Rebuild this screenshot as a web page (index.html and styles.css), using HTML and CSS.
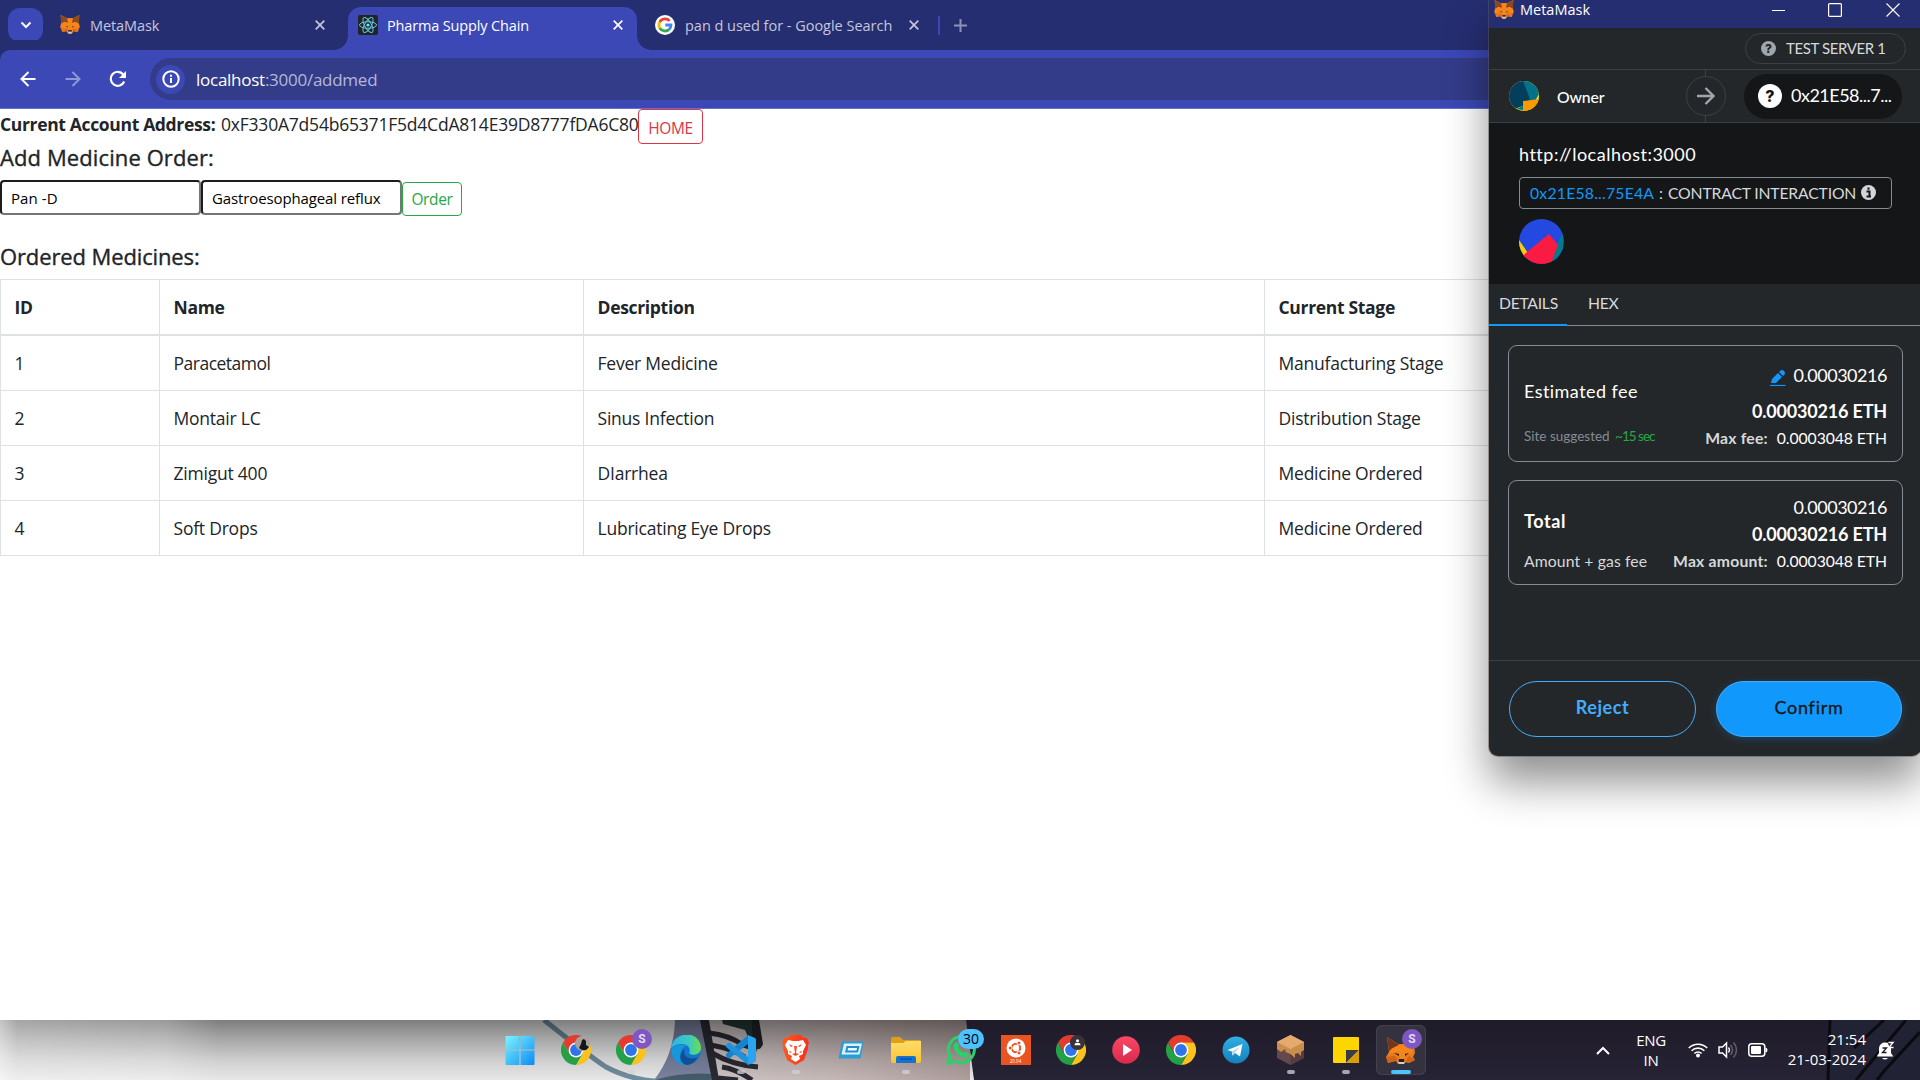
FILE: index.html
```html
<!DOCTYPE html>
<html lang="en">
<head>
<meta charset="utf-8">
<title>Pharma Supply Chain</title>
<link rel="stylesheet" href="styles.css">
</head>
<body>
<svg class="defs" aria-hidden="true">
  <defs>
    <linearGradient id="win" x1="0" y1="0" x2="1" y2="1"><stop offset="0" stop-color="#7df3ff"/><stop offset="1" stop-color="#0a8cf5"/></linearGradient>
    <linearGradient id="edgeTop" x1="0" y1="0" x2="1" y2="0"><stop offset="0" stop-color="#2bb4e8"/><stop offset=".6" stop-color="#3cc9c0"/><stop offset="1" stop-color="#6be04a"/></linearGradient>
    <linearGradient id="folder" x1="0" y1="0" x2="0" y2="1"><stop offset="0" stop-color="#ffdc6b"/><stop offset="1" stop-color="#f9c431"/></linearGradient>
    <linearGradient id="tg" x1="0" y1="0" x2="0" y2="1"><stop offset="0" stop-color="#31aee6"/><stop offset="1" stop-color="#1580bd"/></linearGradient>
    <linearGradient id="brave" x1="0" y1="0" x2="1" y2="0"><stop offset="0" stop-color="#ff5a1c"/><stop offset="1" stop-color="#fb2f1c"/></linearGradient>
    <linearGradient id="play" x1="0" y1="0" x2="0" y2="1"><stop offset="0" stop-color="#fb4766"/><stop offset="1" stop-color="#d92a4c"/></linearGradient>
  </defs>
  <symbol id="fox" viewBox="0 0 32 30" preserveAspectRatio="none">
    <path fill="#e8791f" d="M1 0l10.500 5h9L31 0l-1 12 1.500 6-3 9-7-1.500-3 4h-5l-3-4-7 1.500-3-9L2 12z"/>
    <path fill="#8a4a1e" d="M1 0l10.500 5 1.500 7-6-1-5 3-.5-6zM31 0L20.500 5 19 12l6-1 5 3 .5-6z"/>
    <path fill="#f6851b" d="M11.500 5h9L19 12l2 8-3 4h-4l-3-4 2-8z"/>
    <path fill="#f6851b" d="M2 14l5-3 6 2-2.500 7H.8zM30 14l-5-3-6 2 2.500 7h9.700z"/>
    <path fill="#d96b17" d="M3.500 27l7-5.500 1 4zM28.500 27l-7-5.500-1 4z"/>
    <path fill="#233447" d="M8.500 17l4 1 .7 2zM23.500 17l-4 1-.7 2zM13 24.500l1-1h4l1 1-.3 2h-5.400z"/>
    <path fill="#d5bfb2" d="M11 26l2 .4h6l2-.4-3 3.500h-4z"/>
  </symbol>
  <symbol id="fox-tilt" viewBox="0 0 30 28">
    <path fill="#e8791f" d="M1 1l11 7h10l6 0 1 9-2 4 2 3-6 3-4-1-2 2h-5l-2-3-8 2-2-6 3-5z"/>
    <path fill="#70371c" d="M1 1l12 8-6 3-4 3z"/>
    <path fill="#f6851b" d="M13 9h9l6-1-2 10-6-1-2 6h-4l-2-7-7 1-2 4 2-8z"/>
    <path fill="#cf6516" d="M0 21l9-1 3 4-10 3zM29 24l-6-4-3 5 3 2z"/>
    <path fill="#1b222c" d="M8 17l5 1v2zM23 17l-4 1v2zM13 23h5l.500 3h-6z"/>
    <path fill="#d9cdc6" d="M11 25l2 1h5l2-1-2 3h-5z"/>
  </symbol>
  <symbol id="chrome" viewBox="-15 -15 30 30">
    <path fill="#e33b2e" d="M-13 -7.500A15 15 0 0 1 13 -7.500L0 -7 -6.500 3.500z"/>
    <path fill="#fbc11c" d="M13 -7.500A15 15 0 0 1 0 15L6.500 3.700 0 -7.500z"/>
    <path fill="#24a047" d="M0 15A15 15 0 0 1 -13 -7.500L-6.500 3.750 6.500 3.750z"/>
    <circle r="7.400" fill="#fff"/><circle r="5.900" fill="#2f74ea"/>
  </symbol>
  <symbol id="close" viewBox="0 0 10 10"><path d="M.7.7l8.600 8.600M9.300.7L.7 9.300" stroke="currentColor" stroke-width="1.700" fill="none"/></symbol>
</svg>

<div class="desktop">
<header class="tabstrip">
  <div class="tab-search"><svg width="12" height="8" viewBox="0 0 12 8"><path d="M1.500 1.500L6 6l4.500-4.500" fill="none" stroke="#fff" stroke-width="2"/></svg></div>
  <div class="tab tab-first"><svg class="fav" width="20" height="19"><use href="#fox"/></svg><span class="tab-title t-meta">MetaMask</span><svg class="x" width="10" height="10"><use href="#close"/></svg></div>
  <div class="tab tab-active">
    <svg class="fav" width="20" height="20" viewBox="0 0 20 20"><rect width="20" height="20" rx="2" fill="#222528"/><g fill="none" stroke="#5fc8e0"><ellipse cx="10" cy="10" rx="8.500" ry="3.300"/><ellipse cx="10" cy="10" rx="8.500" ry="3.300" transform="rotate(60 10 10)"/><ellipse cx="10" cy="10" rx="8.500" ry="3.300" transform="rotate(120 10 10)"/></g><circle cx="10" cy="10" r="1.600" fill="#7fe0f5"/></svg>
    <span class="tab-title t-pharma">Pharma Supply Chain</span><svg class="x" width="10" height="10"><use href="#close"/></svg>
  </div>
  <div class="tab tab-last">
    <svg class="fav" width="20" height="20" viewBox="0 0 20 20"><circle cx="10" cy="10" r="10" fill="#fff"/><g fill="none" stroke-width="2.800"><path stroke="#ea4335" d="M14.600 5.900A6.100 6.100 0 0 0 4.700 7.100"/><path stroke="#fbbc05" d="M4.700 7.100a6.100 6.100 0 0 0 0 5.900"/><path stroke="#34a853" d="M4.700 13a6.100 6.100 0 0 0 9.400 1.400"/><path stroke="#4285f4" d="M14.100 14.400A6 6 0 0 0 16 10h-5.700"/></g></svg>
    <span class="tab-title t-google">pan d used for - Google Search</span><svg class="x" width="10" height="10"><use href="#close"/></svg>
  </div>
  <div class="tab-sep"></div>
  <svg class="new-tab" width="13" height="13" viewBox="0 0 13 13"><path d="M6.500 0v13M0 6.500h13" stroke="#8d92b7" stroke-width="2"/></svg>
</header>

<nav class="toolbar">
  <svg class="nav-back" width="16" height="16" viewBox="0 0 16 16"><path d="M15.500 8H2M8.500 1L1.500 8l7 7" fill="none" stroke="#fff" stroke-width="2"/></svg>
  <svg class="nav-fwd" width="16" height="16" viewBox="0 0 16 16"><path d="M.5 8H14M7.500 1l7 7-7 7" fill="none" stroke="#9098d4" stroke-width="2"/></svg>
  <svg class="nav-reload" width="18" height="18" viewBox="0 0 18 18"><path d="M15.200 11.500A7 7 0 1 1 14.300 4.500L16 6.500" fill="none" stroke="#fff" stroke-width="2.200"/><path d="M17 1v7h-7z" fill="#fff"/></svg>
  <div class="omnibox">
    <div class="site-info"><svg width="18" height="18" viewBox="0 0 18 18"><circle cx="9" cy="9" r="7.700" fill="none" stroke="#fff" stroke-width="2"/><path d="M9 8v5M9 4.700v2" stroke="#fff" stroke-width="2"/></svg></div>
    <span class="url"><b>localhost</b>:3000/addmed</span>
  </div>
</nav>

<main class="page">
  <div class="account-row"><strong>Current Account Address:</strong><span class="address">0xF330A7d54b65371F5d4CdA814E39D8777fDA6C80</span><button class="btn btn-home">HOME</button></div>
  <h5 class="h-add">Add Medicine Order:</h5>
  <div class="order-form">
    <div class="field f-pan">Pan -D</div><div class="field f-desc">Gastroesophageal reflux</div><button class="btn btn-order">Order</button>
  </div>
  <h5 class="h-list">Ordered Medicines:</h5>
  <table class="meds">
    <colgroup><col class="c-id"><col class="c-name"><col class="c-desc"><col></colgroup>
    <thead><tr><th>ID</th><th>Name</th><th>Description</th><th>Current Stage</th></tr></thead>
    <tbody>
      <tr><td>1</td><td class="tight">Paracetamol</td><td>Fever Medicine</td><td>Manufacturing Stage</td></tr>
      <tr><td>2</td><td>Montair LC</td><td>Sinus Infection</td><td>Distribution Stage</td></tr>
      <tr><td>3</td><td>Zimigut 400</td><td>DIarrhea</td><td>Medicine Ordered</td></tr>
      <tr><td>4</td><td>Soft Drops</td><td>Lubricating Eye Drops</td><td>Medicine Ordered</td></tr>
    </tbody>
  </table>
</main>

<footer class="taskbar">
  <svg class="wallpaper" width="1920" height="60" viewBox="0 0 1920 60">
    <defs>
      <linearGradient id="shade" x1="0" y1="0" x2="0" y2="1"><stop offset="0" stop-color="#000" stop-opacity=".48"/><stop offset=".3" stop-color="#000" stop-opacity=".32"/><stop offset=".65" stop-color="#000" stop-opacity=".15"/><stop offset="1" stop-color="#000" stop-opacity=".04"/></linearGradient>
      <linearGradient id="pale" x1="0" y1="0" x2="1" y2="0"><stop offset="0" stop-color="#fff" stop-opacity=".55"/><stop offset=".08" stop-color="#fff" stop-opacity=".3"/><stop offset=".75" stop-color="#fff" stop-opacity=".22"/><stop offset="1" stop-color="#fff" stop-opacity="0"/></linearGradient>
      <linearGradient id="skin" x1="0" y1="0" x2="1" y2="0"><stop offset="0" stop-color="#d6cdcd"/><stop offset=".5" stop-color="#cdbfbe"/><stop offset="1" stop-color="#b5a5a3"/></linearGradient>
      <linearGradient id="navy" x1="0" y1="0" x2="0" y2="1"><stop offset="0" stop-color="#1f1b29"/><stop offset="1" stop-color="#262335"/></linearGradient>
    </defs>
    <rect width="1920" height="60" fill="#f1f1f1"/>
    <path d="M700 0h270v60H700z" fill="url(#skin)"/>
    <path d="M675 0h30l9 60h-60q20-25 21-60" fill="#7f87a5"/>
    <path d="M544 0q44 35 62 47 30 16 70 15" fill="none" stroke="#7492a4" stroke-width="5"/>
    <path d="M655 60q26-8 58-6l-1 6z" fill="#47606f"/>
    <path d="M700 0h9l10 60h-7z" fill="#2b2b36"/>
    <path d="M722 0h30l6 24-6 2-7-16-22-6z" fill="#263b36"/>
    <path d="M752 0h7l4 24q-3 8-9 4l-2-6z" fill="#23242b"/>
    <path d="M709 13q20 2 34 12l14 4M711 25q22 4 34 12M712 33q20 12 46 14M722 47q14 2 30 13M718 58l20 2" fill="none" stroke="#2a2b34" stroke-width="5"/>
    <rect width="975" height="60" fill="url(#shade)"/>
    <rect width="220" height="60" fill="url(#pale)"/>
    <path d="M966 0h954v60H974z" fill="url(#navy)"/>
    <path d="M1829 0h91v60h-91z" fill="#212335"/>
    <path d="M1830 0l-2 60M1906 0l-50 60M1920 12l-35 38-8 10M1884 0l-30 28" fill="none" stroke="#0b0a10" stroke-width="3"/>
  </svg>
  <div class="apps">
    <div class="app start"><svg width="30" height="30" viewBox="0 0 30 30"><path fill="url(#win)" d="M1.500 1H14.500v13.500H.5V2a1 1 0 0 1 1-1zM15.500 1h13a1 1 0 0 1 1 1v12.500h-14zM.5 15.500h14V30h-13a1 1 0 0 1-1-1zM15.500 15.500h14V29a1 1 0 0 1-1 1h-13z"/></svg></div>
    <div class="app"><svg width="30" height="30"><use href="#chrome"/></svg><svg class="over photo" width="15" height="15" viewBox="0 0 15 15"><circle cx="7.500" cy="7.500" r="7.500" fill="#a9a29c"/><path d="M4 12l2-4 1-4 2-1 2 2v4l3 2-3 3H7z" fill="#15161b"/></svg></div>
    <div class="app running"><svg width="30" height="30"><use href="#chrome"/></svg><span class="over badge-s">S</span></div>
    <div class="app"><svg width="30" height="30" viewBox="0 0 30 30"><circle cx="15" cy="15" r="15" fill="#1277cc"/><path d="M0 14C1-4 29-6 30 13c0 6-8 9-12 5 2-3 0-9-7-9-6 0-10 3-11 5z" fill="url(#edgeTop)"/><path d="M10 18c0-4 3-7 6-7-7-3-15 0-16 5 1 9 8 15 16 14-4-2-7-7-6-12z" fill="#1796dc"/><path d="M14 14c-3 6 3 12 13 8-3 5-7 8-12 8-8-3-7-13-1-16z" fill="#124f96"/></svg></div>
    <div class="app running"><svg width="30" height="30" viewBox="0 0 30 30"><path d="M22 0v9L4 23q-1 1-2 0l-2-2q-1-1 0-2z" fill="#1583cd"/><path d="M0 10l2-2q1-1 2 0l18 14v8L0 12q-1-1 0-2z" fill="#1c93dd"/><path d="M22 0l7 3q1 .5 1 1.500v21q0 1-1 1.500l-7 3z" fill="#2aa4f0"/></svg></div>
    <div class="app running"><svg width="27" height="30" viewBox="0 0 27 30"><path fill="url(#brave)" d="M8 0h11l3 3 3 0 2 5-1 2 0 4-4 11-8.500 5L5 25 1 14V10L0 8l2-5h3z"/><path fill="#fff" d="M6 5l5 1h5l5-1 3 5-3 6 0 3-4 2 1 3-4.500 3L9 24l1-3-4-2v-3l-3-6z"/><path fill="#f94b20" d="M7 9l4 2-2 1zM20 9l-4 2 2 1zM12 11h3l-1 7 3 1-3.500 2-3.500-2 3-1zM7 16l3 1-2 1zM20 16l-3 1 2 1z"/></svg></div>
    <div class="app"><svg width="26" height="18" viewBox="0 0 26 18"><path d="M4 .5h21.500l-3 17H.5z" fill="#2e9bd4"/><path d="M6 2.500h18l-2.500 11H3.500z" fill="#d7f3ff"/><path d="M8.500 5h13l-1.500 6.500H7z" fill="#278dc7"/><path d="M10 7h9l-.5 2.500h-9z" fill="#e8f9ff"/></svg></div>
    <div class="app running"><svg width="30" height="28" viewBox="0 0 30 28"><path d="M0 3q0-2 2-2h7l3 3h16q2 0 2 2v8H0z" fill="#dfa013"/><path d="M0 7h12l3-2h15v20q0 2-2 2H2q-2 0-2-2z" fill="url(#folder)"/><path d="M5 27v-5q0-2 2-2h16q2 0 2 2v5z" fill="#1473cf"/><path d="M9 23h12" stroke="#0a4f9c" stroke-width="1.500"/></svg></div>
    <div class="app"><svg width="30" height="30" viewBox="0 0 30 30"><path d="M2 28l2-7A13 13 0 1 1 9 26z" fill="none" stroke="#25d366" stroke-width="3"/><path d="M8 9c2-3 4-2 5 2l-1 2 5 5 2-1c4 1 5 3 2 5-5 3-15-6-13-13z" fill="#25d366"/></svg><span class="over badge-30">30</span></div>
    <div class="app"><div class="ubuntu"><svg width="20" height="20" viewBox="0 0 20 20"><circle cx="10" cy="10" r="9.500" fill="#fff"/><circle cx="10" cy="10" r="4.200" fill="none" stroke="#e95420" stroke-width="2"/><g fill="#e95420" stroke="#fff"><circle cx="4.200" cy="10" r="2"/><circle cx="13" cy="5" r="2"/><circle cx="13" cy="15" r="2"/></g></svg><span>20.04</span></div></div>
    <div class="app"><svg width="30" height="30"><use href="#chrome"/></svg><svg class="over person" width="15" height="15" viewBox="0 0 15 15"><circle cx="7.500" cy="7.500" r="7.500" fill="#38323a"/><circle cx="7.500" cy="5.800" r="1.500" fill="#fff"/><path d="M4.500 10.200q0-2.400 3-2.400t3 2.400z" fill="#fff"/></svg></div>
    <div class="app"><svg width="28" height="28" viewBox="0 0 28 28"><circle cx="14" cy="14" r="13.800" fill="url(#play)"/><path d="M11 8l9 6-9 6z" fill="#fff"/></svg></div>
    <div class="app"><svg width="30" height="30"><use href="#chrome"/></svg></div>
    <div class="app"><svg width="28" height="28" viewBox="0 0 28 28"><circle cx="14" cy="14" r="13.500" fill="url(#tg)"/><path d="M5.500 14L20.500 8l-2.500 12.500-5-3.500-2.500 2.500-.5-4z" fill="#fff"/><path d="M10 15.500l8-5-5.500 6.500-2 2.500z" fill="#b8d8ea"/></svg></div>
    <div class="app running"><svg width="27" height="30" viewBox="0 0 27 30"><path d="M13.500 0L27 7v16l-13.500 7L0 23V7z" fill="#65494a"/><path d="M13.500 15v15L27 23V7z" fill="#543c40"/><path d="M13.500 0L27 7v8l-3 2v4l-3-3-3 1v4l-4.500-4-5-2v-3L4 17l-4-3V7z" fill="#c98d4c"/><path d="M13.500 0L27 7l-13.500 7L0 7z" fill="#e6ab6c"/></svg></div>
    <div class="app running"><svg width="26" height="26" viewBox="0 0 26 26"><rect width="26" height="26" rx="1" fill="#fdd600"/><path d="M13 26V13h13z" fill="#3c3d42"/><path d="M13 26l13-13v13z" fill="#d99e05"/></svg></div>
    <div class="app running active"><svg class="fox-app" width="30" height="28"><use href="#fox-tilt"/></svg><span class="over badge-s">S</span></div>
  </div>
  <div class="tray">
    <svg width="14" height="9" viewBox="0 0 14 9"><path d="M1 8l6-6 6 6" fill="none" stroke="#fff" stroke-width="2"/></svg>
    <div class="lang"><span>ENG</span><span>IN</span></div>
    <svg class="wifi" width="20" height="16" viewBox="0 0 20 16"><g fill="none" stroke="#fff" stroke-width="1.600"><path d="M.8 6a13 13 0 0 1 18.400 0M3.600 8.800a9 9 0 0 1 12.800 0M6.400 11.500a5 5 0 0 1 7.200 0"/></g><circle cx="10" cy="13.500" r="2" fill="#fff"/></svg>
    <svg class="vol" width="20" height="18" viewBox="0 0 20 18"><path d="M1 6h3.500L8.500 2v14l-4-4H1z" fill="none" stroke="#fff" stroke-width="1.500"/><path d="M10.500 6.500q2 2.500 0 5" fill="none" stroke="#fff" stroke-width="1.300"/><path d="M12.500 4q4 5 0 10M15.500 1.500q6 7.500 0 15" fill="none" stroke="#625f6d" stroke-width="1.500"/></svg>
    <svg class="bat" width="20" height="14" viewBox="0 0 20 14"><rect x=".8" y=".8" width="16" height="12.400" rx="3" fill="none" stroke="#fff" stroke-width="1.500"/><rect x="3" y="3" width="10" height="8" rx="1" fill="#fff"/><path d="M17.500 4.500q2 0 2 2.500t-2 2.500z" fill="#fff"/></svg>
    <div class="clock"><span class="time">21:54</span><span>21-03-2024</span></div>
    <svg class="bell" width="18" height="19" viewBox="0 0 18 19"><path d="M0 15l2-3V7q1-5.500 6-5.500 6 0 6 5.500v5l2 3v.500H0z" fill="#fff"/><path d="M5 17h6q-3 3-6 0z" fill="#fff"/><path d="M10.500.500h6v6h-4" fill="#1c1a26"/><path d="M5.500 7h4l-4 4.500h4" fill="none" stroke="#1c1a26" stroke-width="1.300"/><path d="M11.500 1.500h4.500l-4 5h4.500" fill="none" stroke="#fff" stroke-width="1.400"/></svg>
  </div>
</footer>
</div>

<aside class="popup">
  <div class="titlebar">
    <svg class="fox" width="20" height="19"><use href="#fox"/></svg><span class="popup-title">MetaMask</span>
    <svg width="13" height="14" viewBox="0 0 13 14"><path d="M0 7.500h13" stroke="#fff"/></svg>
    <svg class="max" width="14" height="14" viewBox="0 0 14 14"><rect x=".6" y=".6" width="12.800" height="12.800" rx="1" fill="none" stroke="#fff" stroke-width="1.200"/></svg>
    <svg class="cls" width="14" height="14" viewBox="0 0 14 14"><path d="M.5.5l13 13M13.500.5l-13 13" stroke="#fff" stroke-width="1.100"/></svg>
  </div>
  <div class="network"><div class="net-pill"><span class="q-small">?</span><span>TEST SERVER 1</span></div></div>
  <div class="parties">
    <svg class="avatar" width="30" height="30" viewBox="0 0 30 30"><clipPath id="ca"><circle cx="15" cy="15" r="15"/></clipPath><g clip-path="url(#ca)"><rect width="30" height="30" fill="#fbe40a"/><path d="M14 0h16v13l-4 7H14z" fill="#03738c"/><path d="M0 0h14l7 18-7 7-9 3-5-4z" fill="#033e5c"/><path d="M14 20l16-2v12H14z" fill="#fa9a02"/><path d="M7 28l7-3v4z" fill="#03738c"/></g></svg>
    <span class="owner">Owner</span>
    <div class="arrow-col"><div class="arrow"><svg width="18" height="18" viewBox="0 0 18 18"><path d="M0 9h16M8.500 1L16.500 9l-8 8" fill="none" stroke="#9fa6ae" stroke-width="2.400"/></svg></div></div>
    <div class="recipient"><span class="q-big">?</span><span class="rec-text">0x21E58...7...</span></div>
  </div>
  <div class="summary">
    <div class="origin">http://localhost:3000</div>
    <div class="action"><span class="contract">0x21E58...75E4A</span><span class="colon">:</span><span class="interaction">CONTRACT INTERACTION</span><svg width="15" height="15" viewBox="0 0 15 15"><circle cx="7.500" cy="7.500" r="7.500" fill="#d2d6da"/><path d="M5.500 6.500h3v5M5.500 11.500h4.500M7.500 2.500v2.200" fill="none" stroke="#141618" stroke-width="2"/></svg></div>
    <svg class="ident" width="45" height="45" viewBox="0 0 45 45"><clipPath id="cb"><circle cx="22.500" cy="22.500" r="22.500"/></clipPath><g clip-path="url(#cb)"><rect width="45" height="45" fill="#2449e1"/><path d="M0 21l9 13-9 11z" fill="#f9cc0b"/><path d="M44 14v31H30l8-20z" fill="#047a8e"/><path d="M0 40l8-7 22-18 9 11-7 19H0z" fill="#fb1a42"/></g></svg>
  </div>
  <div class="ptabs"><div class="ptab on">DETAILS</div><div class="ptab hex">HEX</div></div>
  <div class="fees">
    <section class="card card-fee">
      <div class="left"><div class="est">Estimated fee</div><div class="sug">Site suggested <span>~15 sec</span></div></div>
      <div class="right">
        <div class="amt"><svg width="16" height="16" viewBox="0 0 16 16"><path d="M0 15.500h15.500" stroke="#1098fc" stroke-width="1.200"/><path d="M1 13l1-4 6-6 4 4-6 6z" fill="#1098fc"/><path d="M9 2l1.500-1.500q2-1 3.500.5t.5 3.500L13 6z" fill="#1098fc"/></svg><span>0.00030216</span></div>
        <div class="eth">0.00030216 ETH</div>
        <div class="maxl"><b>Max fee:</b><span>0.0003048 ETH</span></div>
      </div>
    </section>
    <section class="card card-total">
      <div class="left"><div class="tot">Total</div><div class="gas">Amount + gas fee</div></div>
      <div class="right">
        <div class="amt"><span>0.00030216</span></div>
        <div class="eth">0.00030216 ETH</div>
        <div class="maxl"><b>Max amount:</b><span>0.0003048 ETH</span></div>
      </div>
    </section>
  </div>
  <div class="actions"><button class="reject">Reject</button><button class="confirm">Confirm</button></div>
</aside>
</body>
</html>
```
FILE: styles.css
```css
*{box-sizing:border-box}
html,body{margin:0;height:100%;overflow:hidden}
body{position:relative;background:#fff;color:#212529;font:17.5px/27px "Open Sans",sans-serif;white-space:nowrap}
svg{display:block;flex:none}
button{font:inherit;background:none;margin:0;padding:0}
.defs{position:absolute;width:0;height:0}
.desktop{display:flex;flex-direction:column;width:1920px;height:1080px}

/* tab strip */
.tabstrip{display:flex;height:50px;background:#262e72;color:#c4c6db;font-size:14.500px;line-height:20px}
.tab-search{display:flex;align-items:center;justify-content:center;width:35px;height:34px;margin:8px 0 0 8px;border-radius:12px;background:#3b48b6}
.tab{display:flex;align-items:center;height:35px;margin-top:7px}
.tab .fav{margin-right:10px}
.tab .x{margin-left:auto}
.tab-title{padding-top:2px}
.tab-first{width:288px;margin-left:17px;margin-right:17px;padding-right:23px}
.tab-active{position:relative;width:289px;height:43px;padding:0 14px 7px 10px;border-radius:13px 13px 0 0;background:#3b48b6;color:#fff;margin-left:-17px}
.tab-active .fav{margin-right:9px}
.tab-active::before,.tab-active::after{content:"";position:absolute;bottom:0;width:14px;height:14px}
.tab-active::before{left:-14px;background:radial-gradient(circle at 0 0,#262e72 13.500px,#3b48b6 14px)}
.tab-active::after{right:-14px;background:radial-gradient(circle at 100% 0,#262e72 13.500px,#3b48b6 14px)}
.tab-last{width:283px;margin-left:18px}
.tab-last .x{margin-left:17px}
.t-meta{letter-spacing:-.1px}
.t-pharma{letter-spacing:-.15px}
.t-google{letter-spacing:-.02px}
.tab-sep{width:2px;height:19px;margin:16px 0 0 0;background:#3b48b6}
.new-tab{margin:19px 0 0 14px}

.toolbar{display:flex;align-items:center;height:59px;padding-left:20px;border-radius:10px 0 0 0;background:#3b48b6;box-shadow:-10px -10px 0 #262e72;border-bottom:1px solid #6670c6}
.nav-fwd{margin-left:29px}
.nav-reload{margin-left:28px}
.omnibox{display:flex;align-items:center;flex:1;height:42px;margin-left:23px;padding-left:6px;border-radius:21px 0 0 21px;background:#333c88}
.site-info{display:flex;align-items:center;justify-content:center;width:29px;height:29px;border-radius:50%;background:#3b48b6}
.url{margin-left:11px;color:#b3b7da;font-size:17px;letter-spacing:-.26px}
.url b{font-weight:400;color:#fff}

/* page */
.page{display:flex;flex-direction:column;height:911px}
.account-row{display:flex;height:35px;padding-top:2px}
.account-row strong{width:221px;letter-spacing:-.34px}
.address{width:417px;letter-spacing:-.21px}
.btn{border:1px solid;border-radius:4px;font-size:15.500px;text-align:center}
.btn-home{width:65px;height:35px;margin-top:-2px;color:#dc3545;letter-spacing:-.4px;padding-top:3px}
h5{margin:0;font-size:22px;font-weight:500;line-height:27px;-webkit-text-stroke:.35px #212529}
.h-add{margin-bottom:9px;letter-spacing:.1px}
.order-form{display:flex;height:63px}
.field{width:201px;height:35px;padding:0 9px;border:2px solid #767676;border-color:#1c1c1c #767676 #767676 #1c1c1c;border-radius:4px;color:#000;font-size:15px;line-height:33px}
.f-pan{letter-spacing:.1px}
.f-desc{letter-spacing:-.12px}
.btn-order{width:60px;height:34px;margin-top:2px;color:#28a745;letter-spacing:-.35px;padding-top:1px}
.h-list{margin-bottom:9px;letter-spacing:-.12px}
.meds{width:1921px;border-collapse:collapse;table-layout:fixed;letter-spacing:-.22px}
.c-id{width:159px}.c-name{width:424px}.c-desc{width:681px}
.meds th,.meds td{padding:14px 13.500px 13px;border:1px solid #dee2e6;text-align:left}
.meds th{border-bottom-width:2px;letter-spacing:-.32px}
.meds .tight{letter-spacing:-.5px}

/* taskbar */
.taskbar{position:relative;display:flex;align-items:center;height:60px;color:#fff}
.wallpaper{position:absolute;inset:0}
.apps,.tray{position:relative;display:flex;align-items:center}
.apps{padding-left:493px;width:1429px}
.app{position:relative;display:flex;align-items:center;justify-content:center;width:55px;height:60px}
.start{width:53px;margin-right:2px}
.over{position:absolute}
.photo{left:27px;top:16px}
.person{left:27px;top:15px}
.running::after{content:"";position:absolute;bottom:6px;left:23.500px;width:8px;height:4px;border-radius:2px;background:#d2d2d8;opacity:.75}
.active{height:50px;width:50px;margin-left:3px;border-radius:6px;background:#35323f;box-shadow:inset 0 0 0 1px #45424f}
.active::after{left:15px;bottom:1px;width:20px;background:#4cc2ff;opacity:1}
.badge-s{left:29px;top:9px;width:20px;height:20px;border-radius:50%;background:#7e57c2;color:#e4daf4;font:700 12px/20px Roboto,sans-serif;text-align:center}
.active .badge-s{left:26px;top:4px}
.badge-30{left:25px;top:9px;width:26px;height:20px;border-radius:10px;background:#4cc2ff;color:#000;font-size:14px;line-height:20px;text-align:center}
.ubuntu{display:flex;flex-direction:column;align-items:center;width:30px;height:30px;padding-top:3px;background:#e95420;font-size:4.500px;line-height:6px}
.tray{padding-left:167px;font-size:15px;line-height:20px}
.lang{display:flex;flex-direction:column;align-items:center;width:30px;margin-left:26px;letter-spacing:-.3px}
.wifi{margin-left:22px}
.vol{margin-left:10px}
.bat{margin-left:10px}
.clock{display:flex;flex-direction:column;align-items:flex-end;width:80px;margin:-2px 0 0 18px}
.bell{margin-left:11px}

/* wallet popup */
.popup{position:absolute;left:1489px;top:0;width:432px;height:756px;display:flex;flex-direction:column;background:#24272a;color:#fff;border-radius:0 0 9px 9px;box-shadow:0 0 0 1px rgba(90,90,90,.5),0 26px 44px rgba(0,0,0,.44);font-family:Lato,sans-serif}
.titlebar{display:flex;align-items:center;height:28px;padding:0 0 9px 5px;background:#262e72;font:14.500px/20px "Open Sans",sans-serif}
.popup-title{width:252px;margin-left:6px}
.titlebar .max{margin-left:43px}
.titlebar .cls{margin-left:44px}
.network{display:flex;justify-content:flex-end;height:42px;padding:5px 15px 0 0;border-bottom:1px solid #3b4046}
.net-pill{display:flex;align-items:center;width:161px;height:31px;padding-left:15px;border:1px solid #3b4046;border-radius:16px;color:#d6d9dc;font-size:15px;letter-spacing:-.38px}
.q-small,.q-big{display:inline-block;border-radius:50%;text-align:center;letter-spacing:0;font-family:Inter,sans-serif;font-weight:800}
.q-small{width:15px;height:15px;margin-right:10px;background:#9fa6ae;color:#24272a;font-size:12px;line-height:15px}
.parties{display:flex;align-items:center;height:53px;padding-left:20px;border-bottom:1px solid #3b4046}
.owner{width:129px;margin-left:18px;font-size:15.750px;font-weight:500;letter-spacing:-.1px}
.arrow-col{display:flex;align-items:center;justify-content:center;width:40px;height:52px;background:linear-gradient(#3b4046,#3b4046) 19px 0/1px 100% no-repeat}
.arrow{display:flex;align-items:center;justify-content:center;width:40px;height:40px;border:1px solid #3b4046;border-radius:50%;background:#24272a}
.recipient{display:flex;align-items:center;width:158px;height:45px;margin-left:18px;padding-left:14px;border-radius:23px;background:#141618}
.q-big{width:24px;height:24px;background:#fff;color:#141618;font-size:16px;line-height:24px}
.rec-text{margin:-1px 0 0 9px;font-size:18px;letter-spacing:-.5px}
.summary{height:161px;padding:18px 0 0 30px;background:#141618}
.origin{font-size:18px;letter-spacing:.5px}
.action{display:flex;align-items:center;width:373px;height:32px;margin-top:9px;padding:0 0 1px 10px;border:1px solid #848c96;border-radius:4px;color:#d6d9dc;font-size:15.750px}
.action span{margin-top:-1px}
.contract{width:124px;color:#1098fc;letter-spacing:.22px}
.colon{width:14px;text-align:center}
.interaction{width:193px;letter-spacing:-.18px}
.ident{margin-top:10px}
.ptabs{display:flex;height:42px;border-bottom:1px solid #848c96;color:#d6d9dc;font-size:15.750px;line-height:37px;letter-spacing:-.3px}
.ptab.on{width:78px;height:42px;padding-left:10px;border-bottom:2px solid #1098fc}
.hex{padding-left:21px}
.fees{display:flex;flex-direction:column;gap:18px;height:334px;padding:19px 18px 0 19px}
.card{display:flex;justify-content:space-between;padding:0 15px;border:1px solid #848c96;border-radius:9px}
.card-fee{height:117px}
.card-total{height:105px}
.left,.right{display:flex;flex-direction:column}
.right{align-items:flex-end}
.card-fee .left{padding-top:32px}
.est{height:45px;font-size:18px;letter-spacing:.45px}
.sug{color:#848c96;font-size:13.500px;letter-spacing:0}
.sug span{color:#28a745;letter-spacing:-1px;margin-left:2px}
.amt{display:flex;align-items:center;gap:7px;font-size:18px;letter-spacing:-.47px}
.amt svg{margin-top:5px}
.card-fee .amt{margin-top:16px;height:27px}
.card-fee .eth{margin-top:9px}
.eth{height:27px;font-size:18px;font-weight:700;letter-spacing:-.18px}
.maxl{display:flex;gap:9px;font-size:15.750px;line-height:26px;letter-spacing:-.08px}
.maxl b{color:#d6d9dc;letter-spacing:.2px}
.card-total .left{padding-top:27px}
.tot{height:39px;font-size:18px;font-weight:700;letter-spacing:.6px}
.gas{color:#d6d9dc;font-size:15.750px;letter-spacing:.1px}
.card-total .amt{margin-top:13px;height:27px}
.actions{display:flex;gap:20px;height:96px;padding:20px 0 0 20px;border-top:1px solid #3b4046}
.actions button{width:187px;height:56px;border:1px solid #43aefc;border-radius:28px;font-size:18px;padding-bottom:3px}
.actions .reject{color:#43aefc;font-weight:700;letter-spacing:.55px}
.actions .confirm{width:186px;background:#1098fc;color:#141618;font-weight:400;-webkit-text-stroke:.3px #141618;letter-spacing:.75px;box-shadow:0 2px 8px rgba(16,152,252,.25)}
```
